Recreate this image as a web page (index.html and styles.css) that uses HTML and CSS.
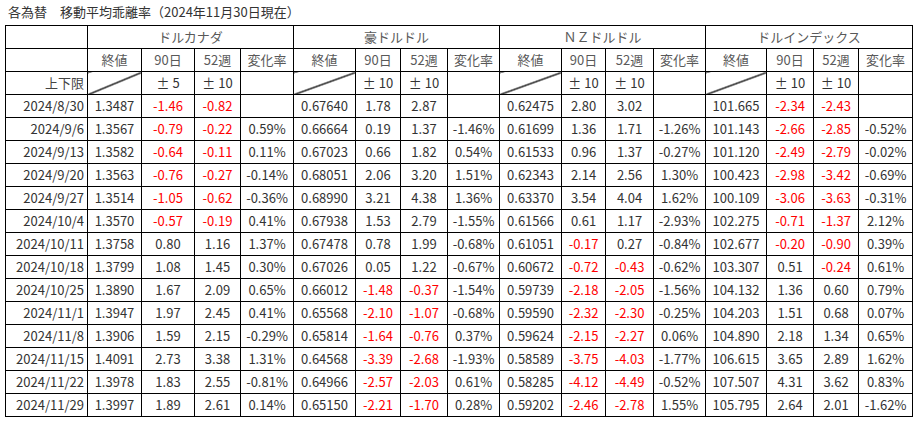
FILE: index.html
```html
<!DOCTYPE html>
<html lang="ja">
<head>
<meta charset="utf-8">
<title>各為替 移動平均乖離率</title>
<link rel="stylesheet" href="styles.css">
</head>
<body>
<div class="title">各為替　移動平均乖離率（2024年11月30日現在）</div>
<table class="rates">
<colgroup>
<col class="c-date">
<col class="w54"><col class="w53"><col class="w46"><col class="w53">
<col class="w62"><col class="w45"><col class="w47"><col class="w52">
<col class="w62"><col class="w44"><col class="w48"><col class="w52">
<col class="w61"><col class="w47"><col class="w45"><col class="w54">
</colgroup>
<thead>
<tr class="grp">
<th></th>
<th colspan="4">ドルカナダ</th>
<th colspan="4">豪ドルドル</th>
<th colspan="4">ＮＺドルドル</th>
<th colspan="4">ドルインデックス</th>
</tr>
<tr class="hd">
<th></th>
<th>終値</th><th>90日</th><th>52週</th><th>変化率</th>
<th>終値</th><th>90日</th><th>52週</th><th>変化率</th>
<th>終値</th><th>90日</th><th>52週</th><th>変化率</th>
<th>終値</th><th>90日</th><th>52週</th><th>変化率</th>
</tr>
<tr class="lim">
<th class="date">上下限</th>
<td class="diag"></td><td><span class="pm">±</span>5</td><td><span class="pm">±</span>10</td><td></td>
<td class="diag"></td><td><span class="pm">±</span>10</td><td><span class="pm">±</span>10</td><td></td>
<td class="diag"></td><td><span class="pm">±</span>10</td><td><span class="pm">±</span>10</td><td></td>
<td class="diag"></td><td><span class="pm">±</span>10</td><td><span class="pm">±</span>10</td><td></td>
</tr>
</thead>
<tbody>
<tr><th class="date">2024/8/30</th>
<td>1.3487</td><td class="n">-1.46</td><td class="n">-0.82</td><td></td>
<td>0.67640</td><td>1.78</td><td>2.87</td><td></td>
<td>0.62475</td><td>2.80</td><td>3.02</td><td></td>
<td>101.665</td><td class="n">-2.34</td><td class="n">-2.43</td><td></td></tr>
<tr><th class="date">2024/9/6</th>
<td>1.3567</td><td class="n">-0.79</td><td class="n">-0.22</td><td>0.59%</td>
<td>0.66664</td><td>0.19</td><td>1.37</td><td>-1.46%</td>
<td>0.61699</td><td>1.36</td><td>1.71</td><td>-1.26%</td>
<td>101.143</td><td class="n">-2.66</td><td class="n">-2.85</td><td>-0.52%</td></tr>
<tr><th class="date">2024/9/13</th>
<td>1.3582</td><td class="n">-0.64</td><td class="n">-0.11</td><td>0.11%</td>
<td>0.67023</td><td>0.66</td><td>1.82</td><td>0.54%</td>
<td>0.61533</td><td>0.96</td><td>1.37</td><td>-0.27%</td>
<td>101.120</td><td class="n">-2.49</td><td class="n">-2.79</td><td>-0.02%</td></tr>
<tr><th class="date">2024/9/20</th>
<td>1.3563</td><td class="n">-0.76</td><td class="n">-0.27</td><td>-0.14%</td>
<td>0.68051</td><td>2.06</td><td>3.20</td><td>1.51%</td>
<td>0.62343</td><td>2.14</td><td>2.56</td><td>1.30%</td>
<td>100.423</td><td class="n">-2.98</td><td class="n">-3.42</td><td>-0.69%</td></tr>
<tr><th class="date">2024/9/27</th>
<td>1.3514</td><td class="n">-1.05</td><td class="n">-0.62</td><td>-0.36%</td>
<td>0.68990</td><td>3.21</td><td>4.38</td><td>1.36%</td>
<td>0.63370</td><td>3.54</td><td>4.04</td><td>1.62%</td>
<td>100.109</td><td class="n">-3.06</td><td class="n">-3.63</td><td>-0.31%</td></tr>
<tr><th class="date">2024/10/4</th>
<td>1.3570</td><td class="n">-0.57</td><td class="n">-0.19</td><td>0.41%</td>
<td>0.67938</td><td>1.53</td><td>2.79</td><td>-1.55%</td>
<td>0.61566</td><td>0.61</td><td>1.17</td><td>-2.93%</td>
<td>102.275</td><td class="n">-0.71</td><td class="n">-1.37</td><td>2.12%</td></tr>
<tr><th class="date">2024/10/11</th>
<td>1.3758</td><td>0.80</td><td>1.16</td><td>1.37%</td>
<td>0.67478</td><td>0.78</td><td>1.99</td><td>-0.68%</td>
<td>0.61051</td><td class="n">-0.17</td><td>0.27</td><td>-0.84%</td>
<td>102.677</td><td class="n">-0.20</td><td class="n">-0.90</td><td>0.39%</td></tr>
<tr><th class="date">2024/10/18</th>
<td>1.3799</td><td>1.08</td><td>1.45</td><td>0.30%</td>
<td>0.67026</td><td>0.05</td><td>1.22</td><td>-0.67%</td>
<td>0.60672</td><td class="n">-0.72</td><td class="n">-0.43</td><td>-0.62%</td>
<td>103.307</td><td>0.51</td><td class="n">-0.24</td><td>0.61%</td></tr>
<tr><th class="date">2024/10/25</th>
<td>1.3890</td><td>1.67</td><td>2.09</td><td>0.65%</td>
<td>0.66012</td><td class="n">-1.48</td><td class="n">-0.37</td><td>-1.54%</td>
<td>0.59739</td><td class="n">-2.18</td><td class="n">-2.05</td><td>-1.56%</td>
<td>104.132</td><td>1.36</td><td>0.60</td><td>0.79%</td></tr>
<tr><th class="date">2024/11/1</th>
<td>1.3947</td><td>1.97</td><td>2.45</td><td>0.41%</td>
<td>0.65568</td><td class="n">-2.10</td><td class="n">-1.07</td><td>-0.68%</td>
<td>0.59590</td><td class="n">-2.32</td><td class="n">-2.30</td><td>-0.25%</td>
<td>104.203</td><td>1.51</td><td>0.68</td><td>0.07%</td></tr>
<tr><th class="date">2024/11/8</th>
<td>1.3906</td><td>1.59</td><td>2.15</td><td>-0.29%</td>
<td>0.65814</td><td class="n">-1.64</td><td class="n">-0.76</td><td>0.37%</td>
<td>0.59624</td><td class="n">-2.15</td><td class="n">-2.27</td><td>0.06%</td>
<td>104.890</td><td>2.18</td><td>1.34</td><td>0.65%</td></tr>
<tr><th class="date">2024/11/15</th>
<td>1.4091</td><td>2.73</td><td>3.38</td><td>1.31%</td>
<td>0.64568</td><td class="n">-3.39</td><td class="n">-2.68</td><td>-1.93%</td>
<td>0.58589</td><td class="n">-3.75</td><td class="n">-4.03</td><td>-1.77%</td>
<td>106.615</td><td>3.65</td><td>2.89</td><td>1.62%</td></tr>
<tr><th class="date">2024/11/22</th>
<td>1.3978</td><td>1.83</td><td>2.55</td><td>-0.81%</td>
<td>0.64966</td><td class="n">-2.57</td><td class="n">-2.03</td><td>0.61%</td>
<td>0.58285</td><td class="n">-4.12</td><td class="n">-4.49</td><td>-0.52%</td>
<td>107.507</td><td>4.31</td><td>3.62</td><td>0.83%</td></tr>
<tr><th class="date">2024/11/29</th>
<td>1.3997</td><td>1.89</td><td>2.61</td><td>0.14%</td>
<td>0.65150</td><td class="n">-2.21</td><td class="n">-1.70</td><td>0.28%</td>
<td>0.59202</td><td class="n">-2.46</td><td class="n">-2.78</td><td>1.55%</td>
<td>105.795</td><td>2.64</td><td>2.01</td><td>-1.62%</td></tr>
</tbody>
</table>
</body>
</html>
```
FILE: styles.css
```css
html, body {
  margin: 0;
  padding: 0;
  background: #ffffff;
}
body {
  font-family: "Noto Sans CJK JP", "Noto Sans", sans-serif;
  font-size: 13px;
  color: #333333;
}
.title {
  height: 25px;
  line-height: 24px;
  padding-left: 8px;
  color: #333333;
  white-space: nowrap;
}
.rates {
  margin-left: 5px;
  border-collapse: collapse;
  table-layout: fixed;
  width: 908px;
}
.rates th,
.rates td {
  border: 1px solid #000000;
  height: 22px;
  padding: 0;
  line-height: 20px;
  text-align: center;
  font-weight: normal;
  white-space: nowrap;
  overflow: hidden;
}
.rates thead th {
  color: #595959;
}
.rates .date {
  text-align: right;
  padding-right: 3px;
  color: #333333;
}
.rates thead .date {
  color: #444444;
}
.rates .n {
  color: #ff0000;
}
.rates .pm {
  margin-right: 3px;
}
.rates .diag {
  background: linear-gradient(to bottom right, transparent calc(50% - 1px), #000000 calc(50% - 0.3px), #000000 calc(50% + 0.3px), transparent calc(50% + 1px));
}
.c-date { width: 82px; }
.w44 { width: 44px; }
.w45 { width: 45px; }
.w46 { width: 46px; }
.w47 { width: 47px; }
.w48 { width: 48px; }
.w52 { width: 52px; }
.w53 { width: 53px; }
.w54 { width: 54px; }
.w61 { width: 61px; }
.w62 { width: 62px; }
```
